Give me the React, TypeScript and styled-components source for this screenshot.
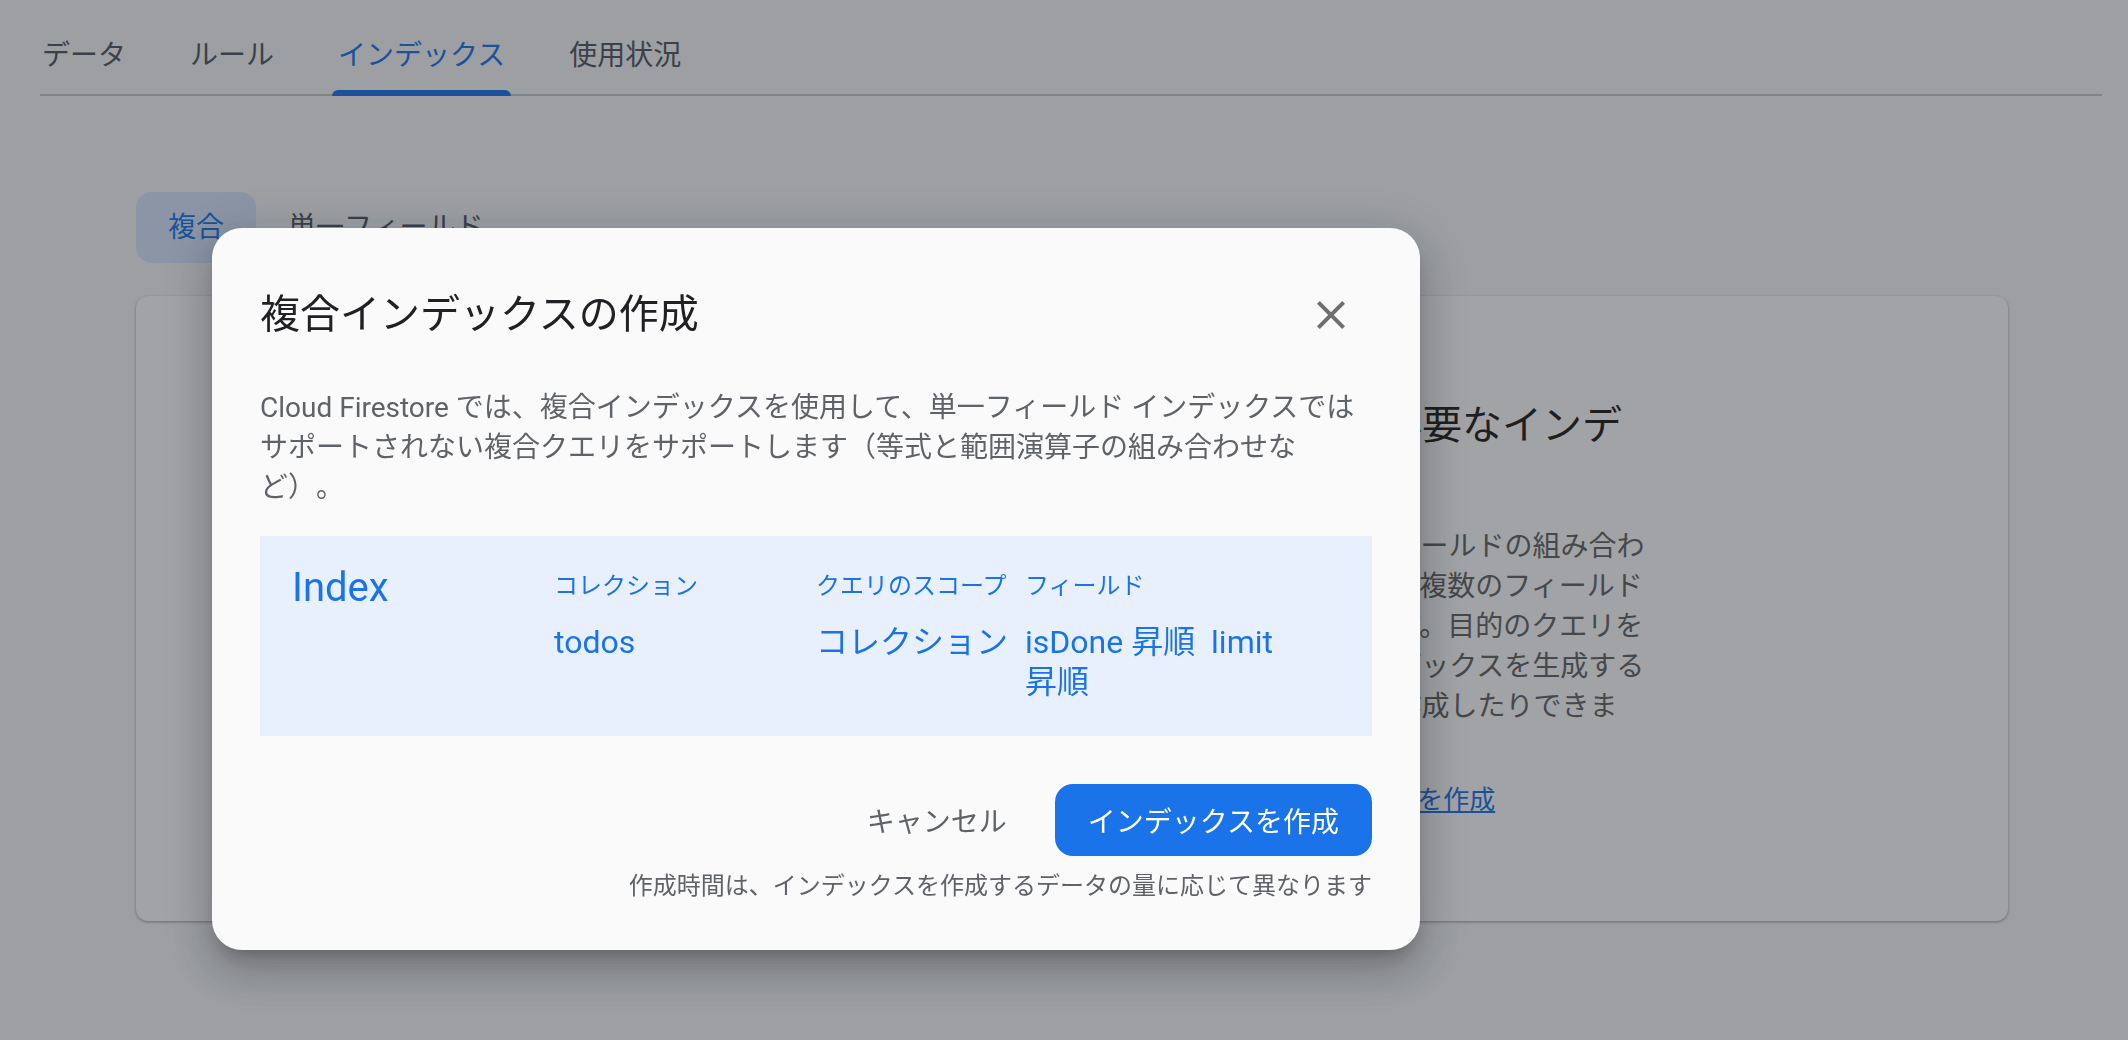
import React from "react";
import styled, { createGlobalStyle, css } from "styled-components";

const GlobalStyle = createGlobalStyle`
  html, body { margin: 0; padding: 0; }
  body {
    background: #f0f4f9;
    font-family: Roboto, "Noto Sans CJK JP", "Noto Sans", sans-serif;
    -webkit-font-smoothing: antialiased;
  }
  * { box-sizing: border-box; }
`;

const Page = styled.div`
  min-height: 1040px;
  padding: 17px 26px 0 40px;
`;

const TabBar = styled.nav`
  display: flex;
  gap: 64px;
  padding-left: 2px;
  border-bottom: 2px solid #c4c7c5;
`;

const Tab = styled.div<{ $active?: boolean }>`
  position: relative;
  height: 77px;
  line-height: 77px;
  font-size: 28px;
  color: #4f5663;
  white-space: nowrap;
  ${(p) =>
    p.$active &&
    css`
      color: #1a73e8;
      &::after {
        content: "";
        position: absolute;
        left: -6px;
        right: -6px;
        bottom: -2px;
        height: 6px;
        border-radius: 6px 6px 0 0;
        background: #1a73e8;
      }
    `}
`;

const Content = styled.main`
  padding: 96px 94px 0 96px;
`;

const Segmented = styled.div`
  display: flex;
`;

const Segment = styled.div<{ $active?: boolean }>`
  height: 71px;
  line-height: 71px;
  padding: 0 32px;
  border-radius: 16px;
  font-size: 28px;
  color: ${(p) => (p.$active ? "#1a73e8" : "#4f5663")};
  background: ${(p) => (p.$active ? "#d3e3fd" : "transparent")};
`;

const Card = styled.section`
  margin-top: 33px;
  height: 625px;
  border-radius: 12px;
  background: #f8fafd;
  box-shadow: 0 1px 2px rgba(60, 64, 67, 0.3), 0 1px 3px 1px rgba(60, 64, 67, 0.15);
  display: flex;
  justify-content: flex-end;
  padding: 106px 356px 0 0;
`;

const EmptyText = styled.div`
  width: 510px;
`;

const EmptyHeading = styled.h2`
  margin: 0;
  font-size: 40px;
  line-height: 48px;
  font-weight: 400;
  color: #1f1f1f;
  line-break: loose;
`;

const EmptyBody = styled.p`
  margin: 29px 0 0;
  font-size: 28px;
  line-height: 40px;
  color: #5f6368;
`;

const EmptyLink = styled.a`
  display: block;
  margin-top: 13px;
  padding-left: 16px;
  font-size: 26px;
  line-height: 40px;
  color: #1a73e8;
  text-decoration: underline;
`;

const Scrim = styled.div`
  position: fixed;
  inset: 0;
  background: rgba(32, 33, 36, 0.4);
  padding: 228px 0 0 212px;
`;

const Dialog = styled.div`
  width: 1208px;
  background: #fafafa;
  border-radius: 30px;
  padding: 59px 48px 48px;
  box-shadow: 0 11px 15px -7px rgba(0, 0, 0, 0.2), 0 24px 38px 3px rgba(0, 0, 0, 0.14),
    0 9px 46px 8px rgba(0, 0, 0, 0.12);
`;

const DialogHeader = styled.div`
  display: flex;
  align-items: center;
  justify-content: space-between;
  height: 56px;
`;

const DialogTitle = styled.h1`
  margin: 0;
  font-size: 40px;
  line-height: 56px;
  font-weight: 400;
  color: #202124;
`;

const CloseButton = styled.button`
  width: 80px;
  height: 56px;
  margin-right: 1px;
  border: 0;
  background: transparent;
  padding: 0;
  display: flex;
  align-items: center;
  justify-content: center;
  color: #6f6f6f;
  svg { display: block; }
`;

const DialogBody = styled.p`
  margin: 45px 0 28px;
  font-size: 28px;
  line-height: 40px;
  color: #5f6368;
  text-spacing-trim: space-all;
`;

const IndexBox = styled.div`
  background: #e8f0fe;
  padding: 32px 32px 34px;
  display: grid;
  grid-template-columns: 262px 262px 209px 290px;
  grid-template-rows: 36px auto;
  row-gap: 18px;
  color: #1a73e8;
`;

const IndexTitle = styled.div`
  grid-row: 1 / span 2;
  font-size: 40px;
  line-height: 40px;
`;

const ColLabel = styled.div`
  font-size: 24px;
  line-height: 36px;
  white-space: nowrap;
`;

const ColValue = styled.div`
  font-size: 32px;
  line-height: 40px;
  word-break: keep-all;
`;

const FieldItem = styled.span`
  margin-right: 8px;
`;

const Actions = styled.div`
  margin-top: 48px;
  display: flex;
  justify-content: flex-end;
  align-items: center;
  gap: 24px;
`;

const TextButton = styled.button`
  height: 72px;
  padding: 0 24px;
  border: 0;
  background: transparent;
  font-family: inherit;
  font-size: 28px;
  color: #5f6368;
`;

const PrimaryButton = styled.button`
  height: 72px;
  padding: 0 33px;
  border: 0;
  border-radius: 18px;
  background: #1a73e8;
  color: #ffffff;
  font-family: inherit;
  font-size: 28px;
`;

const Footnote = styled.div`
  margin-top: 14px;
  text-align: right;
  font-size: 24px;
  line-height: 32px;
  color: #5f6368;
`;

export default function App() {
  return (
    <>
      <GlobalStyle />
      <Page>
        <TabBar>
          <Tab>データ</Tab>
          <Tab>ルール</Tab>
          <Tab $active>インデックス</Tab>
          <Tab>使用状況</Tab>
        </TabBar>
        <Content>
          <Segmented>
            <Segment $active>複合</Segment>
            <Segment>単一フィールド</Segment>
          </Segmented>
          <Card>
            <EmptyText>
              <EmptyHeading>クエリ実行に必要なインデックス</EmptyHeading>
              <EmptyBody>
                インデックスは各フィールドの組み合わせを定義します。また複数のフィールドで並べ替えができます。目的のクエリを実行して自動でインデックスを生成するか、ここから手動で作成したりできます。
              </EmptyBody>
              <EmptyLink href="#">新規複合インデックスを作成</EmptyLink>
            </EmptyText>
          </Card>
        </Content>
      </Page>
      <Scrim>
        <Dialog role="dialog">
          <DialogHeader>
            <DialogTitle>複合インデックスの作成</DialogTitle>
            <CloseButton aria-label="閉じる">
              <svg width="48" height="48" viewBox="0 0 24 24" fill="currentColor">
                <path d="M19 6.41L17.59 5 12 10.59 6.41 5 5 6.41 10.59 12 5 17.59 6.41 19 12 13.41 17.59 19 19 17.59 13.41 12z" />
              </svg>
            </CloseButton>
          </DialogHeader>
          <DialogBody>
            Cloud Firestore では、複合インデックスを使用して、単一フィールド インデックスではサポートされない複合クエリをサポートします（等式と範囲演算子の組み合わせなど）。
          </DialogBody>
          <IndexBox>
            <IndexTitle>Index</IndexTitle>
            <ColLabel>コレクション</ColLabel>
            <ColLabel>クエリのスコープ</ColLabel>
            <ColLabel>フィールド</ColLabel>
            <ColValue>todos</ColValue>
            <ColValue>コレクション</ColValue>
            <ColValue>
              <FieldItem>isDone 昇順</FieldItem> <FieldItem>limit 昇順</FieldItem>
            </ColValue>
          </IndexBox>
          <Actions>
            <TextButton>キャンセル</TextButton>
            <PrimaryButton>インデックスを作成</PrimaryButton>
          </Actions>
          <Footnote>作成時間は、インデックスを作成するデータの量に応じて異なります</Footnote>
        </Dialog>
      </Scrim>
    </>
  );
}
